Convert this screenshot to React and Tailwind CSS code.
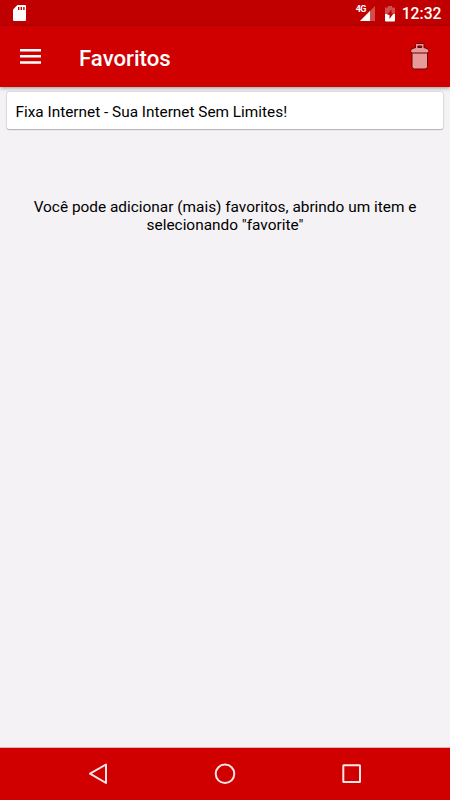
import React from "react";

const favorites = [{ id: 1, title: "Fixa Internet - Sua Internet Sem Limites!" }];

function StatusBar() {
  return (
    <div className="h-[26px] shrink-0 bg-[#c00000] flex items-center justify-between pl-[13px] pr-[8.5px] text-white">
      <svg width="13" height="16" viewBox="0 0 13 16">
        <path d="M4.5 0H12a1 1 0 0 1 1 1v14a1 1 0 0 1-1 1H1a1 1 0 0 1-1-1V4.5z" fill="#fff" />
        <path d="M5 2h1.4v3H5zM7.6 2H9v3H7.6zM10.2 2h1.4v3h-1.4z" fill="#c00000" />
      </svg>

      <div className="flex items-center pt-[2px]">
        {/* Signal */}
        <div className="relative w-[20px] h-[16px] mr-[9px]">
          <span className="absolute left-0 -top-px text-[9px] leading-[9px] font-bold tracking-[-0.5px]">4G</span>
          <svg width="20" height="16" viewBox="0 0 20 16" className="absolute left-0 top-0">
            <path d="M19 0v15H4z" fill="#fff" fillOpacity="0.3" />
            <path d="M14 5v10H4z" fill="#fff" />
          </svg>
        </div>
        {/* Battery */}
        <svg width="10" height="16" viewBox="0 0 10 16" className="mr-[7px]">
          <path d="M3 0h4v1.5h3V8H0V1.5h3z" fill="#fff" fillOpacity="0.3" />
          <path d="M0 8h10v6.5a1 1 0 0 1-1 1H1a1 1 0 0 1-1-1z" fill="#fff" />
          <path d="M6.5 3.5 2 8.8h2.500V13l4-5.500h-2z" fill="#c00000" />
        </svg>
        <span className="text-[15.7px] leading-none font-medium">12:32</span>
      </div>
    </div>
  );
}

function Header() {
  return (
    <header className="h-[61px] shrink-0 bg-[#d00000] flex items-center pl-[20px] pr-[20px] shadow-[0_1px_4px_rgba(0,0,0,0.4)]">
      <button type="button" aria-label="Menu">
        <svg width="21" height="15" viewBox="0 0 21 15" fill="#fff">
          <path d="M0 0h21v2.5H0zM0 6.1h21v2.5H0zM0 12.2h21v2.5H0z" />
        </svg>
      </button>
      <h1 className="ml-[38px] mt-[3px] text-[22.2px] leading-none font-medium text-white">Favoritos</h1>
      <button type="button" aria-label="Apagar" className="ml-auto">
        <svg width="20" height="28" viewBox="0 0 20 28" fill="#e89a9a" stroke="#700000" strokeWidth="1">
          <path d="M2 9h15.5v14.5a2.5 2.5 0 0 1-2.5 2.5H4.500A2.500 2.500 0 0 1 2 23.500z" />
          <path d="M.5 8Q.5 6 4 5q.8-.2 1.500-.2V1.500q0-1 1-1h6.500q1 0 1 1v3.300q.8 0 1.500.2Q19 6 19 8q0 2-2 2H2.500Q.5 10 .5 8z" />
          <path d="M7.800 3h3.900v1.500H7.800z" fill="#d00000" />
        </svg>
      </button>
    </header>
  );
}

function NavBar() {
  return (
    <nav className="h-[52px] shrink-0 bg-[#d00000] flex items-center justify-between pl-[88px] pr-[88px] shadow-[0_-1px_0_#e0b5b9]">
      <svg width="20" height="22" viewBox="0 0 20 22" fill="none" stroke="#fff" strokeOpacity="0.9" strokeWidth="2" strokeLinejoin="round">
        <path d="M18 1.5V20L2 10.7z" />
      </svg>
      <svg width="22" height="22" viewBox="0 0 22 22" fill="none" stroke="#fff" strokeOpacity="0.9" strokeWidth="2">
        <circle cx="11" cy="10.8" r="9.3" />
      </svg>
      <svg width="20" height="20" viewBox="0 0 20 20" fill="none" stroke="#fff" strokeOpacity="0.9" strokeWidth="2">
        <rect x="1.3" y="1.3" width="16.7" height="16.7" rx="0.5" />
      </svg>
    </nav>
  );
}

export default function App() {
  return (
    <div className="h-screen flex flex-col bg-[#f4f2f5] text-black font-[Roboto,sans-serif]">
      <StatusBar />
      <Header />

      <main className="flex-1 px-[7px] pt-[5px]">
        {favorites.map((item) => (
          <div
            key={item.id}
            className="h-[37px] bg-white rounded-[2px] pl-[8.5px] pt-[4px] flex items-center text-[15.36px] shadow-[0_0_2px_rgba(0,0,0,0.3),0_1px_1px_rgba(0,0,0,0.2)]"
          >
            {item.title}
          </div>
        ))}

        <p className="mt-[69px] px-[20px] text-center text-[15.4px] leading-[18px]">
          Você pode adicionar (mais) favoritos, abrindo um item e selecionando "favorite"
        </p>
      </main>

      <NavBar />
    </div>
  );
}
